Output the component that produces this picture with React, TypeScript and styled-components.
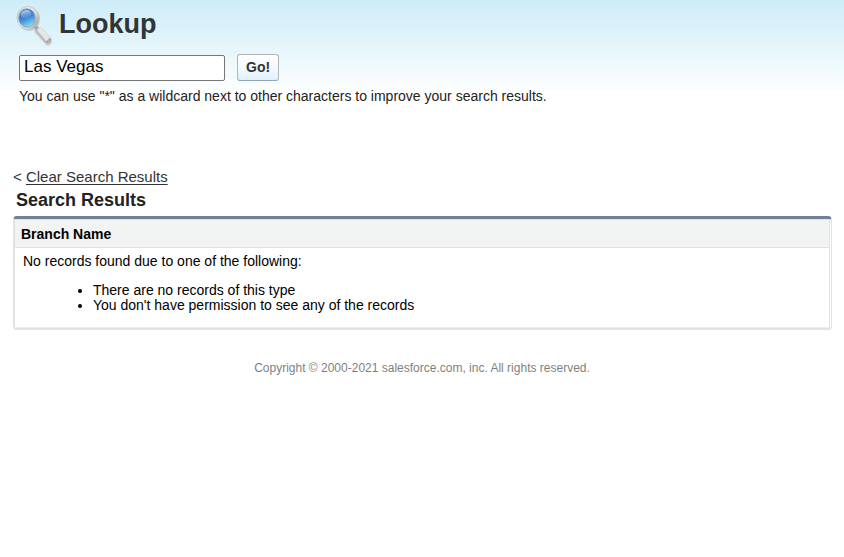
import React, { useState } from "react";
import styled, { createGlobalStyle } from "styled-components";

const GlobalStyle = createGlobalStyle`
  body {
    margin: 0;
    background: #fff;
    color: #000;
    font-family: "Liberation Sans", Arial, Helvetica, sans-serif;
    font-size: 14px;
    line-height: 15px;
  }
`;

const Header = styled.header`
  padding: 4px 15px 64px;
  background: linear-gradient(#cdecf8 0, #e6f6fb 50px, #fff 94px);
  color: #222;
`;

const TitleRow = styled.div`
  display: flex;
  align-items: flex-start;
  gap: 6px;
`;

const Title = styled.h1`
  margin: 4px 0 0;
  font-size: 27px;
  line-height: 32px;
  color: #333435;
`;

const SearchForm = styled.form`
  display: flex;
  gap: 12px;
  margin: 8px 4px;
`;

const SearchInput = styled.input`
  box-sizing: border-box;
  width: 206px;
  height: 26px;
  margin: 1px 0 0;
  padding: 0 4px 3px;
  border: 1px solid #767676;
  border-radius: 2px;
  background: #fff;
  color: #000;
  font: 17px "Liberation Sans", Arial, sans-serif;
`;

const GoButton = styled.button`
  box-sizing: border-box;
  height: 27px;
  padding: 0 8px 1px;
  border: 1px solid #b5b5b5;
  border-bottom-color: #8fa6b9;
  border-radius: 3px;
  background: linear-gradient(#fff, #f3f9ff 50%, #e2f0fe);
  color: #333;
  font: bold 14px "Liberation Sans", Arial, sans-serif;
`;

const Hint = styled.p`
  margin: 0 4px;
`;

const Results = styled.main`
  padding: 0 12px 0 13px;
`;

const ClearRow = styled.div`
  font-size: 15px;
  line-height: 17px;
  color: #333;
`;

const ClearLink = styled.a`
  color: #333;
  text-underline-offset: 2px;
`;

const SectionTitle = styled.h2`
  margin: 4px 3px 5px;
  font-size: 18px;
  line-height: 22px;
  color: #222;
`;

const Panel = styled.section`
  border: 1px solid #e0e3e5;
  border-top: 3px solid #747e96;
  border-bottom: 2px solid #e0e3e5;
  border-radius: 4px;
  padding: 0 1px 0 0;
`;

const Table = styled.table`
  width: 100%;
  border-spacing: 0;
  border: 1px solid #e0e3e5;
  border-bottom-color: #eceeef;
`;

const HeadCell = styled.th`
  padding: 7px 6px 5px;
  background: #f2f3f3;
  border-bottom: 1px solid #e0e3e5;
  text-align: left;
`;

const Cell = styled.td`
  padding: 6px 7px 14px 8px;
`;

const Reasons = styled.ul`
  margin: 14px 0 0;
  padding-left: 70px;
`;

const Footer = styled.footer`
  padding: 31px 0 16px;
  font-size: 12px;
  text-align: center;
  color: #7f7f7f;
`;

function MagnifierIcon() {
  return (
    <svg width="38" height="42" viewBox="0 0 38 42" aria-hidden="true">
      <defs>
        <linearGradient id="glass" x1="0.3" y1="0" x2="0.7" y2="1">
          <stop offset="0" stopColor="#2a62b8" />
          <stop offset="0.5" stopColor="#3d8bd6" />
          <stop offset="1" stopColor="#8fe6f5" />
        </linearGradient>
        <linearGradient id="shine" x1="0" y1="0" x2="0" y2="1">
          <stop offset="0" stopColor="#d5e4f7" stopOpacity="0.85" />
          <stop offset="1" stopColor="#7fb0e6" stopOpacity="0.2" />
        </linearGradient>
        <linearGradient id="metal" x1="0" y1="0" x2="1" y2="0.6">
          <stop offset="0" stopColor="#b4b8bb" />
          <stop offset="0.4" stopColor="#efefee" />
          <stop offset="0.8" stopColor="#d6d5d4" />
          <stop offset="1" stopColor="#aaa9a9" />
        </linearGradient>
      </defs>
      <path d="M23 27 33 38" stroke="#97a3a8" strokeWidth="7" strokeLinecap="round" opacity="0.45" />
      <path d="M19 21 25 28" stroke="#a9aaab" strokeWidth="4" />
      <path d="M25 27 33 36" stroke="#bab9b9" strokeWidth="7" strokeLinecap="round" />
      <path d="M25 26 33 35" stroke="#e8e6e5" strokeWidth="5" strokeLinecap="round" />
      <path d="M32 38 35 35" stroke="#aaa8a8" strokeWidth="2" strokeLinecap="round" />
      <ellipse cx="14" cy="15" rx="11" ry="12" fill="#98a6ad" opacity="0.4" />
      <ellipse cx="13" cy="14" rx="11" ry="11.5" fill="url(#metal)" stroke="#bcc1c4" strokeWidth="0.7" />
      <ellipse cx="12" cy="14" rx="8.3" ry="9.2" fill="url(#glass)" stroke="#8a9fb4" strokeWidth="0.8" />
      <ellipse cx="11" cy="10" rx="5.5" ry="4" fill="url(#shine)" transform="rotate(-15 11 10)" />
    </svg>
  );
}

export default function App() {
  const [query, setQuery] = useState("Las Vegas");
  return (
    <>
      <GlobalStyle />
      <Header>
        <TitleRow>
          <MagnifierIcon />
          <Title>Lookup</Title>
        </TitleRow>
        <SearchForm role="search" onSubmit={(e) => e.preventDefault()}>
          <SearchInput
            aria-label="Search"
            value={query}
            onChange={(e) => setQuery(e.target.value)}
          />
          <GoButton type="submit">Go!</GoButton>
        </SearchForm>
        <Hint>
          You can use "*" as a wildcard next to other characters to improve your search results.
        </Hint>
      </Header>
      <Results>
        <ClearRow>
          &lt; <ClearLink href="#clear">Clear Search Results</ClearLink>
        </ClearRow>
        <SectionTitle>Search Results</SectionTitle>
        <Panel>
          <Table>
            <thead>
              <tr>
                <HeadCell scope="col">Branch Name</HeadCell>
              </tr>
            </thead>
            <tbody>
              <tr>
                <Cell>
                  No records found due to one of the following:
                  <Reasons>
                    <li>There are no records of this type</li>
                    <li>You don't have permission to see any of the records</li>
                  </Reasons>
                </Cell>
              </tr>
            </tbody>
          </Table>
        </Panel>
      </Results>
      <Footer>Copyright © 2000-2021 salesforce.com, inc. All rights reserved.</Footer>
    </>
  );
}
